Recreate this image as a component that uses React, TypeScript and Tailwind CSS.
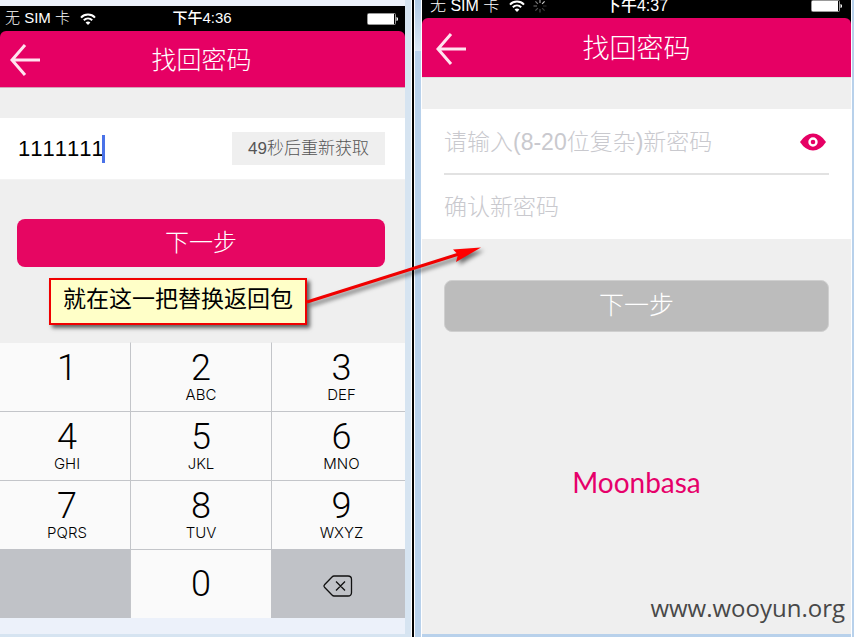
import React from "react";

const sans = "font-['Liberation_Sans','Noto_Sans_CJK_SC',sans-serif]";

function WifiIcon({ className }: { className: string }) {
  return (
    <svg className={className} viewBox="0 0 16 12" fill="none" aria-hidden="true">
      <path d="M1 4.6C4.8.6 11.2.6 15 4.6" stroke="#fff" strokeWidth="2" />
      <path d="M3.8 7.2c2.4-2.3 6-2.3 8.4 0" stroke="#fff" strokeWidth="2" />
      <path d="M8 12 5.6 9.4c1.3-1.2 3.500-1.200 4.800 0Z" fill="#fff" />
    </svg>
  );
}

function Spinner() {
  return (
    <svg className="ml-2 size-3.5" viewBox="0 0 14 14" aria-hidden="true">
      {[0.2, 0.3, 0.35, 0.4, 0.5, 0.6, 0.8, 1].map((opacity, i) => (
        <path
          key={i}
          d="M7 .5v3.500"
          stroke="#ccc"
          strokeWidth="1.2"
          opacity={opacity}
          transform={`rotate(${i * 45 + 90} 7 7)`}
        />
      ))}
    </svg>
  );
}

function Battery() {
  return (
    <svg className="h-3 w-8" viewBox="0 0 32 12" aria-hidden="true">
      <rect x=".5" y=".5" width="28" height="11" rx="1" fill="none" stroke="#999" />
      <rect x="1" y="1" width="26" height="10" fill="#fff" />
      <path d="M29.500 4c2 0 2 4 0 4Z" fill="#fff" />
    </svg>
  );
}

function BackArrow() {
  return (
    <svg className="h-8 w-[30px]" viewBox="0 0 30 32" fill="none" stroke="#ffe3ef" strokeWidth="3" aria-hidden="true">
      <path d="M15 1 2 16l13 15M2 16h28" />
    </svg>
  );
}

function EyeIcon() {
  return (
    <svg className="h-[18px] w-[26px]" viewBox="0 0 26 18" aria-hidden="true">
      <path d="M0 9Q5.500.5 13 .5T26 9q-5.500 8.500-13 8.500T0 9Z" fill="#e60064" />
      <circle cx="13" cy="9" r="3.500" fill="#e60064" stroke="#fff" strokeWidth="2.400" />
    </svg>
  );
}

function DeleteIcon() {
  return (
    <svg className="h-[22px] w-[30px]" viewBox="0 0 30 22" fill="none" stroke="#111" strokeWidth="1.300" aria-hidden="true">
      <path d="M11 1h14q3.500 0 3.500 3.500v13q0 3.500-3.500 3.500H11q-1 0-2-1l-7.500-7.800q-1-1.200 0-2.400L9 2q1-1 2-1ZM13 6.500l9 9M22 6.500l-9 9" />
    </svg>
  );
}

const keys = [
  ["1", ""], ["2", "ABC"], ["3", "DEF"],
  ["4", "GHI"], ["5", "JKL"], ["6", "MNO"],
  ["7", "PQRS"], ["8", "TUV"], ["9", "WXYZ"],
];

function Keypad() {
  return (
    <div className="grid grid-cols-[130fr_141fr_134fr] text-black">
      {keys.map(([digit, letters], i) => (
        <button
          key={digit}
          className={`flex h-[69px] flex-col items-center border-t bg-[#fafafa] pt-2 ${
            i < 3 ? "border-t-[#efefef]" : "border-t-[#c3c5c9]"
          } ${i % 3 === 0 ? "pl-1" : "border-l border-l-[#c3c5c9]"} ${i % 3 === 2 ? "pl-1.5" : ""}`}
        >
          <span className="font-[Roboto,sans-serif] text-[36px] leading-[34px] font-light">{digit}</span>
          <span className="font-[Inter,sans-serif] text-[15px] leading-5 font-light">{letters}</span>
        </button>
      ))}
      <div className="h-[69px] bg-[#c0c2c7]" />
      <button className="flex h-[69px] items-center justify-center border-t border-l border-[#c3c5c9] bg-[#fafafa] font-[Roboto,sans-serif] text-[36px] leading-9 font-light">
        0
      </button>
      <button aria-label="删除" className="flex h-[69px] items-center justify-center bg-[#c0c2c7] pt-1">
        <DeleteIcon />
      </button>
    </div>
  );
}

function CodeScreen() {
  return (
    <section className="relative flex min-w-0 flex-[405] flex-col border-b-[3px] border-[#d6e4f1] bg-[#ecf1fa] pt-1.5">
      <div className="grid h-[25px] grid-cols-3 items-center bg-black pr-1.5 pl-[5px] text-[15px] text-white">
        <div className="flex items-center font-light">
          <span>无 SIM 卡</span>
          <WifiIcon className="ml-2.5 h-3 w-4" />
        </div>
        <span className="text-center font-medium">下午4:36</span>
        <div className="flex justify-end"><Battery /></div>
      </div>
      <div className="bg-black">
        <header className="grid h-[57px] grid-cols-[48px_1fr_60px] items-center rounded-t-md border-b border-[#d3a5b8] bg-[#e60064] pt-0.5 pl-2.5 text-white">
          <button aria-label="返回"><BackArrow /></button>
          <h1 className="text-center text-[25px] leading-8 font-light">找回密码</h1>
        </header>
      </div>
      <div className="flex h-[254px] flex-col bg-[#efefef] pt-[30px]">
        <div className="flex h-[62px] items-center justify-between border-b border-[#f3f3f3] bg-white pr-5 pl-[18px]">
          <div className="flex items-center">
            <input
              aria-label="验证码"
              defaultValue="1111111"
              className="[field-sizing:content] text-[22px] leading-7 text-black outline-none [font-kerning:none]"
            />
            <span className="-ml-0.5 h-7 w-[3px] bg-[#4a72e8]" />
          </div>
          <button className="h-[33px] w-[153px] bg-[#efefef] text-[17px] font-light text-[#555]">
            49秒后重新获取
          </button>
        </div>
        <button className="mx-5 mt-[39px] ml-[17px] h-12 rounded-lg bg-[#e60662] text-[24px] font-light text-white">
          下一步
        </button>
      </div>
      <Keypad />
      <div className="h-4" />

      {/* Annotation laid over both screens */}
      <div className="absolute top-[278px] left-[49px] z-10 flex h-[47px] w-[258px] items-center justify-center border-2 border-[#f00000] bg-[#ffffc8] pb-1 text-[23px] whitespace-nowrap text-black shadow-[3px_3px_4px_rgba(0,0,0,0.6)]">
        就在这一把替换返回包
      </div>
      <svg
        className="absolute top-[238px] left-[307px] z-10 h-[76px] w-[182px] overflow-visible drop-shadow-[3px_3px_2px_rgba(0,0,0,0.55)]"
        viewBox="0 0 182 76"
        aria-hidden="true"
      >
        <path d="M0 64 152 16" stroke="#f00000" strokeWidth="3" />
        <path d="m174 9.500-28 2 5 5-2 7.500Z" fill="#ff0000" />
      </svg>
    </section>
  );
}

function PasswordScreen() {
  const field =
    "w-full min-w-0 text-[23px] leading-8 font-light text-black outline-none placeholder:text-[#c9c9ce] placeholder:opacity-100";
  return (
    <section className="flex min-w-0 flex-[429] flex-col border-b-[3px] border-[#b8d1eb] bg-[#efefef]">
      <div className="grid h-[18px] grid-cols-3 items-start bg-black pr-2 pl-2 text-[16px] leading-3 text-white">
        <div className="flex h-3 items-center font-light">
          <span>无 SIM 卡</span>
          <WifiIcon className="ml-2.5 h-3 w-4" />
          <Spinner />
        </div>
        <span className="text-center font-medium">下午4:37</span>
        <div className="flex justify-end"><Battery /></div>
      </div>
      <div className="bg-black">
        <header className="grid h-[60px] grid-cols-[46px_1fr_60px] items-center rounded-t-md border-b border-[#ddd] bg-[#e60064] pt-0.5 pl-3.5 text-white">
          <button aria-label="返回"><BackArrow /></button>
          <h1 className="text-center text-[27px] leading-8 font-light">找回密码</h1>
        </header>
      </div>
      <div className="mt-[31px] bg-white px-[22px]">
        <div className="flex h-[66px] items-center border-b-2 border-[#e2e2e2] pt-0.5 pr-[3px]">
          <input type="text" aria-label="新密码" placeholder="请输入(8-20位复杂)新密码" className={field} />
          <button aria-label="显示密码"><EyeIcon /></button>
        </div>
        <div className="flex h-16 items-center">
          <input type="text" aria-label="确认新密码" placeholder="确认新密码" className={field} />
        </div>
      </div>
      <button className="mx-[22px] mt-[41px] h-[52px] rounded-lg border border-[#cfcfcf] bg-[#bcbcbc] text-[25px] font-light text-white">
        下一步
      </button>
      <p className="mt-[134px] text-center font-[Lato,sans-serif] text-[28px] leading-8 text-[#e6006a]">Moonbasa</p>
      <p className="mt-auto pr-1.5 pb-2 text-right font-['Open_Sans',sans-serif] text-[24px] leading-9 text-[#484848]">
        www.wooyun.org
      </p>
    </section>
  );
}

export default function App() {
  return (
    <main className={`flex w-full overflow-hidden bg-white ${sans}`}>
      <CodeScreen />
      <div className="flex w-[17px] shrink-0">
        <div className="w-1.5 bg-[#d6e4f1]" />
        <div className="ml-px w-0.5 bg-black" />
        <div className="ml-px flex w-1.5 flex-col bg-[#b8d1eb]">
          <div className="h-[51px] bg-linear-to-b from-[#b0cae4] to-[#dce9f6]" />
        </div>
      </div>
      <PasswordScreen />
      <div className="ml-px w-0.5 shrink-0 bg-[#b8d1eb]" />
    </main>
  );
}
